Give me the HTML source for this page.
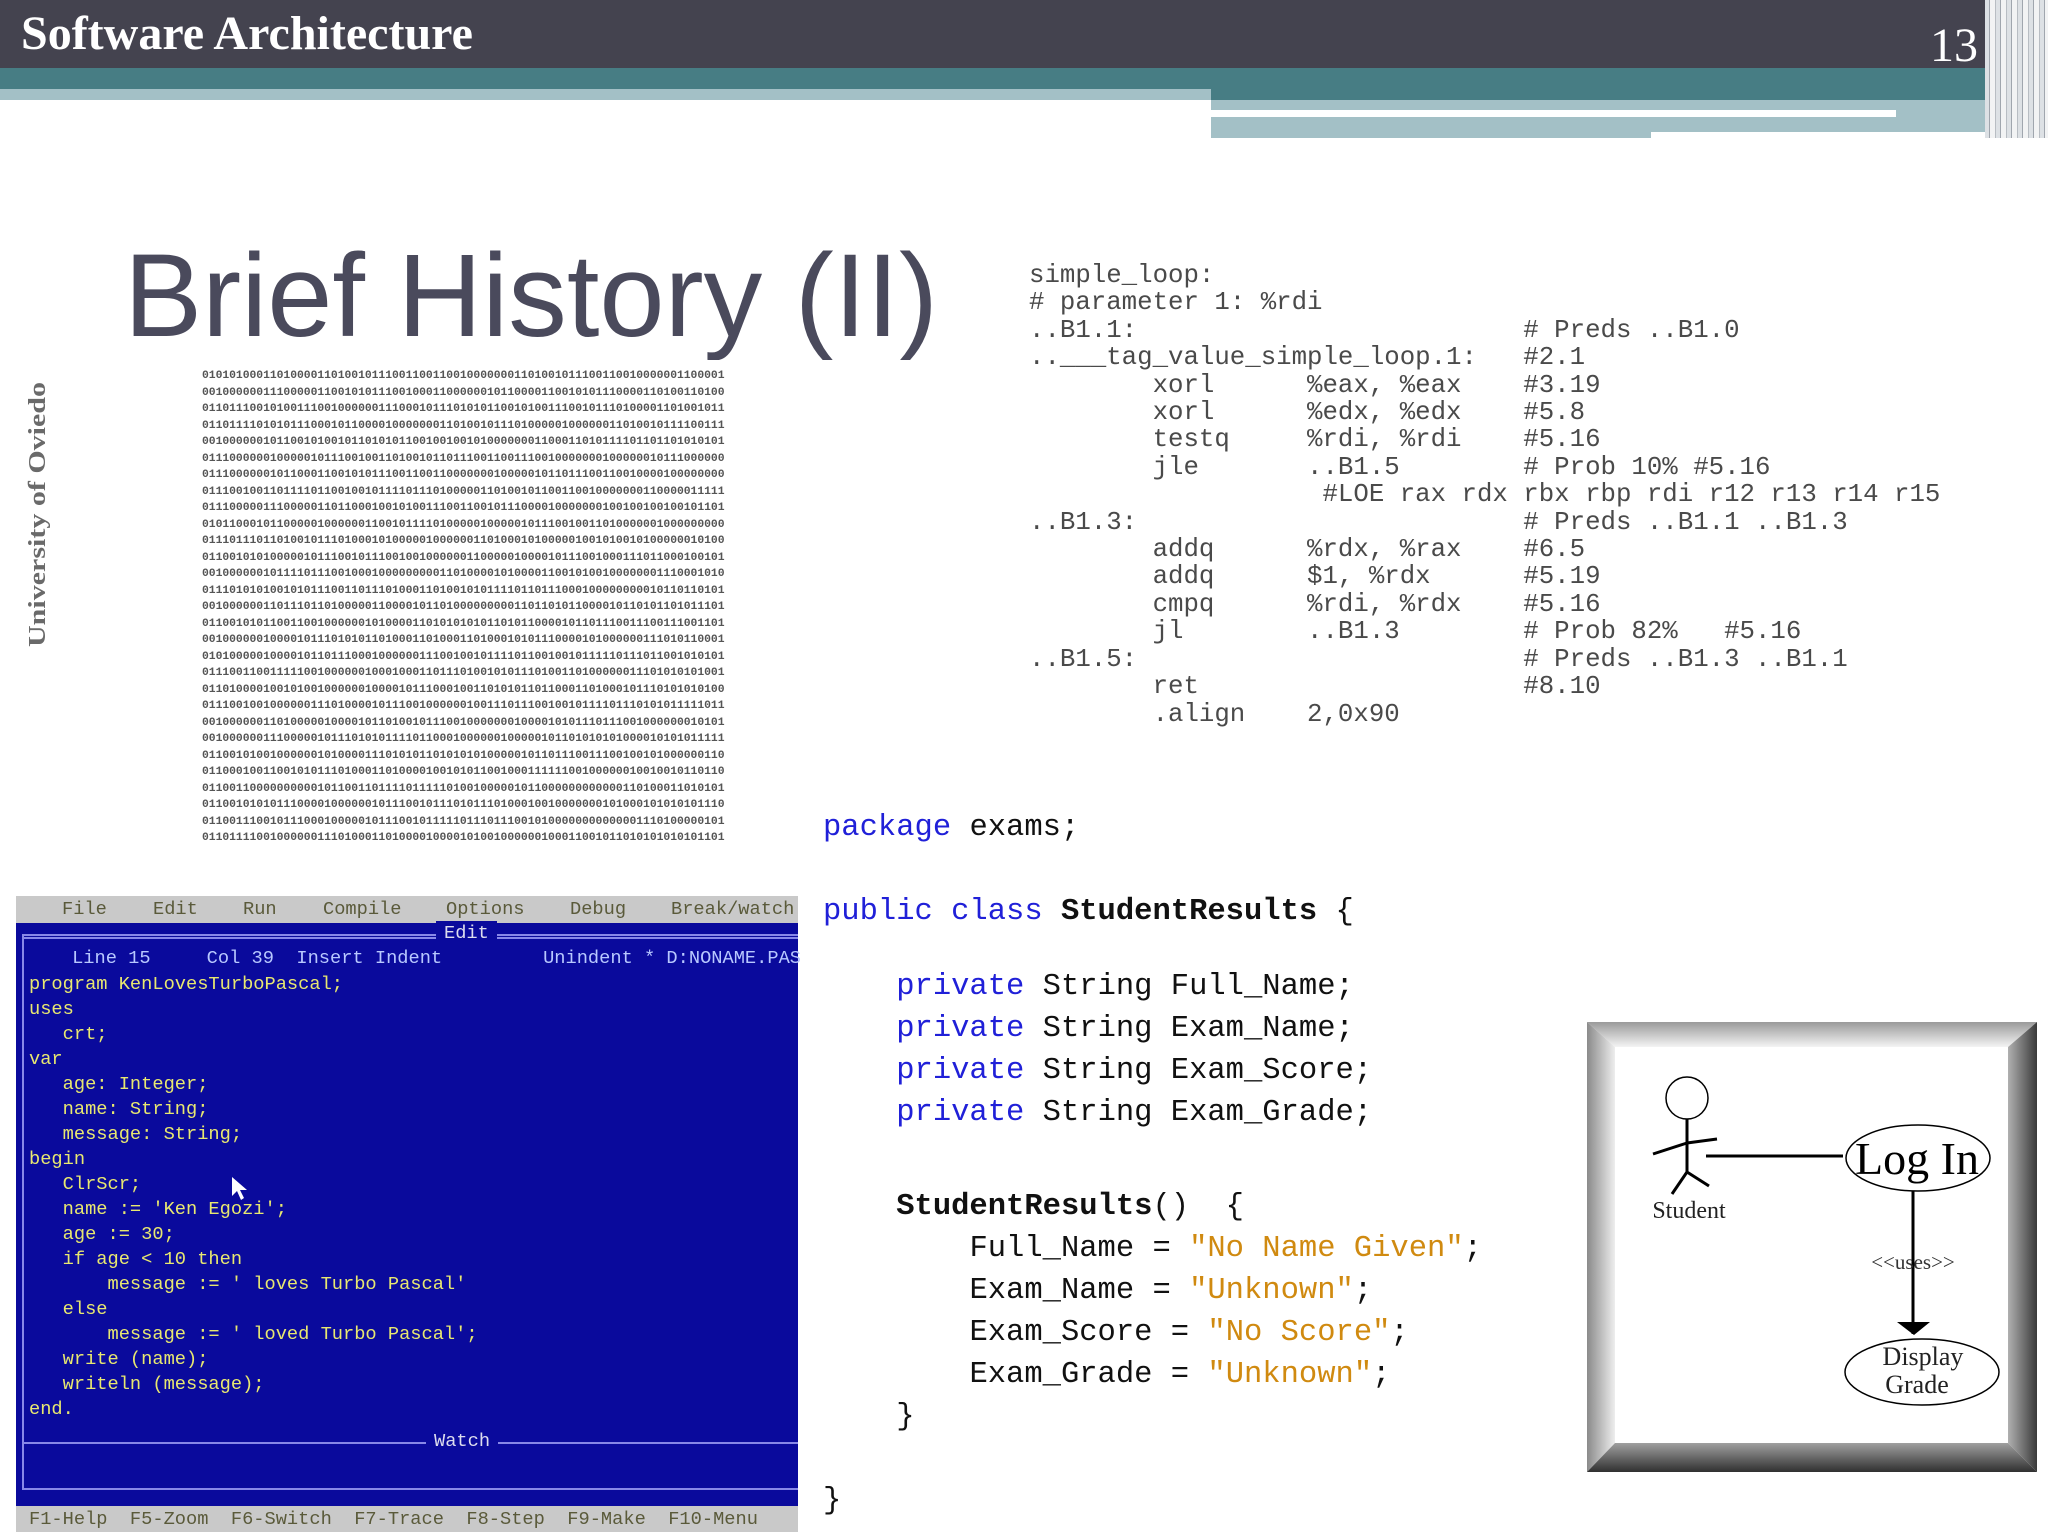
<!DOCTYPE html>
<html><head><meta charset="utf-8"><style>
*{margin:0;padding:0}
body{width:2048px;height:1536px;position:relative;background:#fff;overflow:hidden;font-family:"Liberation Sans",sans-serif}
.a{position:absolute}
#asm{left:1029px;top:262px;font-size:26px;line-height:27.4px;color:#4a4a4a;font-family:"Liberation Mono",monospace;white-space:pre;transform:scaleX(0.99);transform-origin:0 0}
.j{position:absolute;font-family:"Liberation Mono",monospace;white-space:pre;font-size:30.5px;color:#111;font-weight:bold;line-height:36px}
.k{color:#2020d8;font-weight:normal}
.s{color:#d08a10;font-weight:normal}
.n{font-weight:normal}
#tp{left:16px;top:896px;width:782px;height:636px;background:#0a0a9c}
.tpl{position:absolute;font-family:"Liberation Mono",monospace;white-space:pre;font-size:18.7px;color:#e8e870;line-height:25px}
.gbar{position:absolute;left:0;width:782px;background:#c9c9c9}
.gt{position:absolute;font-family:"Liberation Mono",monospace;white-space:pre;font-size:18.7px;color:#5a5a3a}
#bin{left:202px;top:368px;font-size:11.4px;line-height:16.5px;color:#555;font-weight:bold;font-family:"Liberation Mono",monospace;white-space:pre;letter-spacing:-0.05px}
</style></head><body>
<div class="a" style="left:0;top:0;width:2048px;height:68px;background:#44434f"></div>
<div class="a" style="left:0;top:68px;width:1211px;height:21px;background:#477d84"></div>
<div class="a" style="left:0;top:89px;width:1211px;height:11px;background:#a3c0c6"></div>
<div class="a" style="left:1211px;top:68px;width:837px;height:32px;background:#477d84"></div>
<div class="a" style="left:1211px;top:100px;width:774px;height:38px;background:#a3c0c6"></div>
<div class="a" style="left:1211px;top:110px;width:685px;height:7px;background:#fff"></div>
<div class="a" style="left:1651px;top:132px;width:358px;height:6px;background:#fff"></div>
<div class="a" style="left:1985px;top:0;width:63px;height:138px;background:repeating-linear-gradient(90deg,#dde1e5 0 4px,#a0a6ae 4px 5px,#f2f3f4 5px 10px,#b8bdc3 10px 11px)"></div>
<div class="a" style="left:21px;top:6px;font-family:'Liberation Serif',serif;font-weight:bold;font-size:48px;color:#fff">Software Architecture</div>
<div class="a" style="left:1930px;top:18px;font-family:'Liberation Serif',serif;font-size:48px;color:#fff">13</div>
<svg class="a" style="left:0;top:0" width="1000" height="360"><text x="124" y="336" font-family="Liberation Sans" font-size="118" fill="#4a4a5c" textLength="814" lengthAdjust="spacingAndGlyphs">Brief History (II)</text></svg>
<svg class="a" style="left:18px;top:370px" width="40" height="290"><text transform="translate(27,277) rotate(-90)" font-family="Liberation Serif" font-weight="bold" font-size="24" fill="#6a6a6a" textLength="265" lengthAdjust="spacingAndGlyphs">University of Oviedo</text></svg>
<div id="bin" class="a">01010100011010000110100101110011001100100000001101001011100110010000001100001
00100000011100000110010101110010001100000010110000110010101110000110100110100
01101110010100111001000000111000101110101011001010011100101110100001101001011
01101111010101110001011000010000000110100101110100000100000011010010111100111
00100000010110010100101101010110010010010100000001100011010111101101101010101
01110000001000001011100100110100101101110011001110010000000100000010111000000
01110000001011000110010101110011001100000001000001011011100110010000100000000
01110010011011110110010010111101110100000110100101100110010000000110000011111
01110000011100000110110001001010011100110010111000010000000100100100100101101
01011000101100000100000011001011110100000100000101110010011010000001000000000
01110111011010010111010001010000010000001101000101000001001010010100000010100
01100101010000010111001011100100100000011000001000010111001000111011000100101
00100000010111101110010001000000000110100001010000110010100100000001110001010
01110101010010101110011011101000110100101011110110111000100000000010110110101
00100000011011101101000001100001011010000000001101101011000010110101101011101
01100101011001100100000010100001101010101011010110000101101110011100111001101
00100000010000101110101011010001101000110100010101110000101000000111010110001
01010000010000101101110001000000111001001011110110010010111110111011001010101
01110011001111100100000010001000110111010010101110100110100000011101010101001
01101000010010100100000010000101110001001101010110110001101000101110101010100
01110010010000001110100001011100100000010011101110010010111101110101011111011
00100000011010000010000101101001011100100000001000010101110111001000000010101
00100000011100000101110101011110110001000000100000101101010101000010101011111
01100101001000000101000011101010110101010100000101101110011100100101000000110
01100010011001010111010001101000010010101100100011111100100000010010010110110
01100110000000000101100110111101111101001000001011000000000000110100011010101
01100101010111000010000001011100101110101110100010010000000101000101010101110
01100111001011100010000010111001011111011101110010100000000000001110100000101
01101111001000000111010001101000010000101001000000100011001011010101010101101</div>
<div id="asm" class="a">simple_loop:
# parameter 1: %rdi
..B1.1:                         # Preds ..B1.0
..___tag_value_simple_loop.1:   #2.1
        xorl      %eax, %eax    #3.19
        xorl      %edx, %edx    #5.8
        testq     %rdi, %rdi    #5.16
        jle       ..B1.5        # Prob 10% #5.16
                   #LOE rax rdx rbx rbp rdi r12 r13 r14 r15
..B1.3:                         # Preds ..B1.1 ..B1.3
        addq      %rdx, %rax    #6.5
        addq      $1, %rdx      #5.19
        cmpq      %rdi, %rdx    #5.16
        jl        ..B1.3        # Prob 82%   #5.16
..B1.5:                         # Preds ..B1.3 ..B1.1
        ret                     #8.10
        .align    2,0x90</div>
<div class="j" style="left:823px;top:810px"><span class="k">package</span> <span class="n">exams;</span></div>
<div class="j" style="left:823px;top:894px"><span class="k">public class</span> StudentResults <span class="n">{</span></div>
<div class="j" style="left:823px;top:969px">    <span class="k">private</span> <span class="n">String Full_Name;</span></div>
<div class="j" style="left:823px;top:1011px">    <span class="k">private</span> <span class="n">String Exam_Name;</span></div>
<div class="j" style="left:823px;top:1053px">    <span class="k">private</span> <span class="n">String Exam_Score;</span></div>
<div class="j" style="left:823px;top:1095px">    <span class="k">private</span> <span class="n">String Exam_Grade;</span></div>
<div class="j" style="left:823px;top:1189px">    StudentResults<span class="n">()  {</span></div>
<div class="j" style="left:823px;top:1231px">        <span class="n">Full_Name = </span><span class="s">"No Name Given"</span><span class="n">;</span></div>
<div class="j" style="left:823px;top:1273px">        <span class="n">Exam_Name = </span><span class="s">"Unknown"</span><span class="n">;</span></div>
<div class="j" style="left:823px;top:1315px">        <span class="n">Exam_Score = </span><span class="s">"No Score"</span><span class="n">;</span></div>
<div class="j" style="left:823px;top:1357px">        <span class="n">Exam_Grade = </span><span class="s">"Unknown"</span><span class="n">;</span></div>
<div class="j" style="left:823px;top:1399px"><span class="n">    }</span></div>
<div class="j" style="left:823px;top:1483px"><span class="n">}</span></div>
<div id="tp" class="a">
 <div class="gbar" style="top:0;height:27px"></div>
 <div class="gt" style="left:46px;top:2px">File</div><div class="gt" style="left:137px;top:2px">Edit</div><div class="gt" style="left:227px;top:2px">Run</div><div class="gt" style="left:307px;top:2px">Compile</div><div class="gt" style="left:430px;top:2px">Options</div><div class="gt" style="left:554px;top:2px">Debug</div><div class="gt" style="left:655px;top:2px">Break/watch</div>
 <div class="a" style="left:6px;top:38px;width:776px;height:556px;border:2px solid #8888e8;border-right:none;box-sizing:border-box"></div>
 <div class="a" style="left:6px;top:41px;width:776px;height:0;border-top:2px solid #8888e8"></div>
 <div class="tpl" style="left:420px;top:25px;background:#0a0a9c;color:#dde;padding:0 8px">Edit</div>
 <div class="tpl" style="left:0;top:50px;color:#b8c8ff">     Line 15     Col 39  Insert Indent         Unindent * D:NONAME.PAS</div>
 <div class="tpl" style="left:13px;top:76px">program KenLovesTurboPascal;
uses
   crt;
var
   age: Integer;
   name: String;
   message: String;
begin
   ClrScr;
   name := 'Ken Egozi';
   age := 30;
   if age &lt; 10 then
       message := ' loves Turbo Pascal'
   else
       message := ' loved Turbo Pascal';
   write (name);
   writeln (message);
end.</div>
 <div class="a" style="left:6px;top:546px;width:776px;height:0;border-top:2px solid #8888e8"></div>
 <div class="tpl" style="left:410px;top:533px;background:#0a0a9c;color:#dde;padding:0 8px">Watch</div>
 <svg class="a" style="left:214px;top:280px" width="20" height="26"><path d="M2 1 L2 20 L7 15 L11 24 L14 22 L10 14 L17 14 Z" fill="#fff"/></svg>
 <div class="gbar" style="top:610px;height:26px"></div>
 <div class="gt" style="left:13px;top:612px">F1-Help  F5-Zoom  F6-Switch  F7-Trace  F8-Step  F9-Make  F10-Menu</div>
</div>
<svg class="a" style="left:1587px;top:1022px" width="451" height="451">
 <defs>
  <linearGradient id="gt" x1="0" y1="0" x2="0" y2="1"><stop offset="0" stop-color="#9a9a9a"/><stop offset="1" stop-color="#f4f4f4"/></linearGradient>
  <linearGradient id="gl" x1="0" y1="0" x2="1" y2="0"><stop offset="0" stop-color="#8a8a8a"/><stop offset="1" stop-color="#eeeeee"/></linearGradient>
  <linearGradient id="gr" x1="0" y1="0" x2="1" y2="0"><stop offset="0" stop-color="#b0b0b0"/><stop offset="1" stop-color="#3a3a3a"/></linearGradient>
  <linearGradient id="gb" x1="0" y1="0" x2="0" y2="1"><stop offset="0" stop-color="#a0a0a0"/><stop offset="1" stop-color="#303030"/></linearGradient>
 </defs>
 <polygon points="0,0 450,0 421,25 28,25" fill="url(#gt)"/>
 <polygon points="0,0 28,25 28,421 0,450" fill="url(#gl)"/>
 <polygon points="450,0 450,450 421,421 421,25" fill="url(#gr)"/>
 <polygon points="0,450 28,421 421,421 450,450" fill="url(#gb)"/>
 <rect x="28" y="25" width="393" height="396" fill="#fff"/>
 <g stroke="#000" stroke-width="3" fill="none">
  <circle cx="100" cy="76" r="21" stroke-width="1.5"/>
  <line x1="100" y1="97" x2="100" y2="150"/>
  <line x1="66" y1="132" x2="100" y2="121"/><line x1="100" y1="121" x2="130" y2="117"/>
  <line x1="100" y1="150" x2="85" y2="172"/><line x1="100" y1="150" x2="122" y2="164"/>
  <line x1="119" y1="134" x2="256" y2="134"/>
  <line x1="326" y1="169" x2="326" y2="312"/>
 </g>
 <ellipse cx="331" cy="136" rx="72" ry="33" fill="none" stroke="#000" stroke-width="1.5"/>
 <ellipse cx="335" cy="350" rx="77" ry="33" fill="none" stroke="#000" stroke-width="1.5"/>
 <polygon points="310,300 343,300 327,313" fill="#000"/>
 <text x="330" y="152" font-family="Liberation Serif" font-size="46" text-anchor="middle">Log In</text>
 <text x="102" y="196" font-family="Liberation Serif" font-size="24" text-anchor="middle" fill="#222">Student</text>
 <text x="326" y="247" font-family="Liberation Serif" font-size="21" text-anchor="middle" fill="#333">&lt;&lt;uses&gt;&gt;</text>
 <text x="336" y="343" font-family="Liberation Serif" font-size="26" text-anchor="middle" fill="#222">Display</text>
 <text x="330" y="371" font-family="Liberation Serif" font-size="26" text-anchor="middle" fill="#222">Grade</text>
</svg>
</body></html>
